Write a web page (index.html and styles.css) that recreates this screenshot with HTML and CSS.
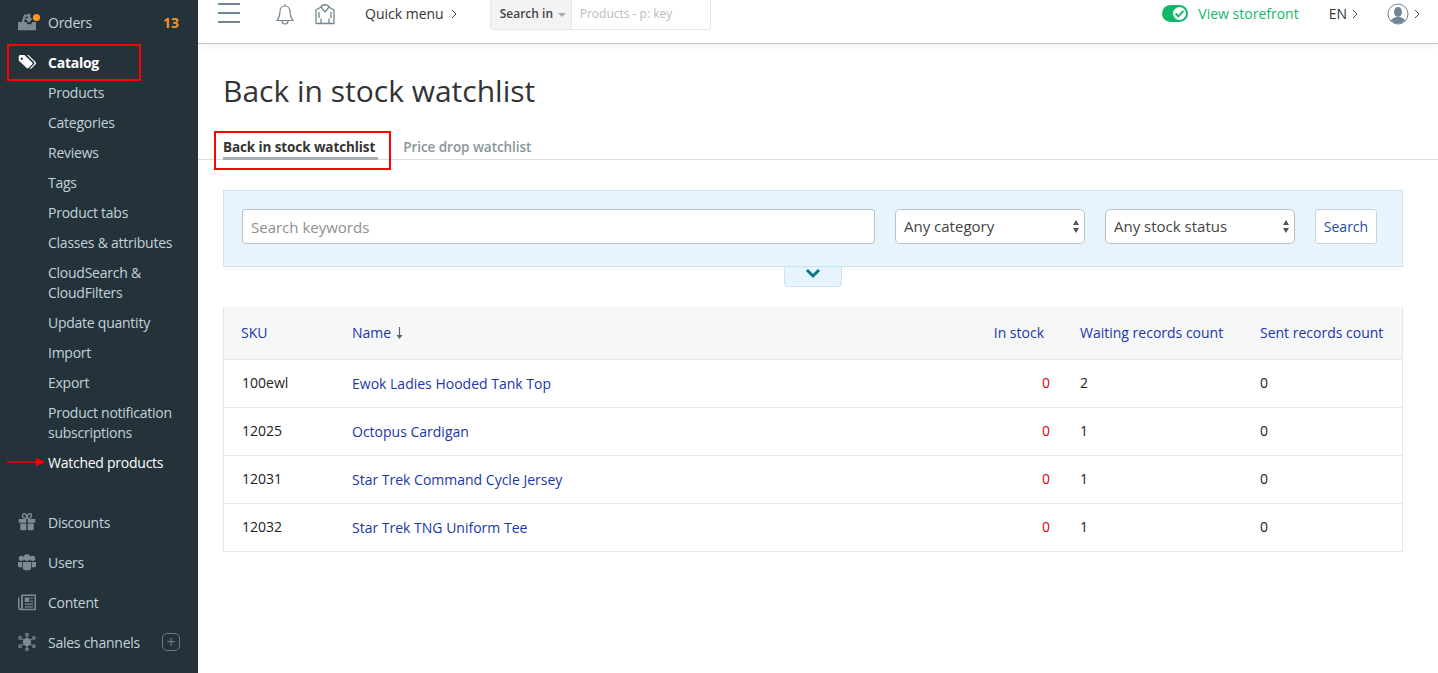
FILE: index.html
```html
<!DOCTYPE html>
<html>
    <head>
        <meta charset="utf-8" />
        <title>Back in stock watchlist</title>
        <link rel="stylesheet" href="styles.css">
    </head>
    <body>
        <div class="page">
            <div class="sidebar">
                <a class="nav-item">
                    <svg class="nav-icon" viewBox="0 0 24 24"><path d="M0 23V12h5L8 2h5v3h-3L8 12h3l1.500 3h5L19 12h5v11z"/><path d="M13 1h3.500v6H20l-5.500 6L9 7h4z"/></svg>
                    <span class="orders-dot"></span>
                    <span>Orders</span>
                    <span class="count">13</span>
                </a>
                <a class="nav-item current">
                    <svg class="nav-icon" viewBox="0 0 24 24"><path d="M1 4.500A2 2 0 0 1 3 2.500h5.500L19 12.500a1.800 1.800 0 0 1 0 2.500l-5 5a1.800 1.800 0 0 1-2.500 0L1 10zM5 6a1.600 1.600 0 1 0 0 3.200A1.600 1.600 0 0 0 5 6z"/><path d="M12 2.500h2L23.500 12a2 2 0 0 1 0 3l-6 6h-2l6-6.500a1.500 1.500 0 0 0 0-2.200z"/></svg>
                    <span>Catalog</span>
                </a>
                <div class="subnav">
                    <a>Products</a>
                    <a>Categories</a>
                    <a>Reviews</a>
                    <a>Tags</a>
                    <a>Product tabs</a>
                    <a>Classes &amp; attributes</a>
                    <a>CloudSearch &amp; CloudFilters</a>
                    <a>Update quantity</a>
                    <a>Import</a>
                    <a>Export</a>
                    <a>Product notification subscriptions</a>
                    <a class="active">Watched products</a>
                </div>
                <a class="nav-item">
                    <svg class="nav-icon" viewBox="0 0 24 24"><path d="M1 8h10v5H1zM13 8h10v5H13zM3 14h8v9H5a2 2 0 0 1-2-2zM13 14h8v7a2 2 0 0 1-2 2h-6z"/><path d="M12 7C9 7 6 6.500 6 4S8 0 10 1.500 12 7 12 7zm0 0c3 0 6-.5 6-3S16 0 14 1.500 12 7 12 7z" fill="none" stroke="#7d8b93" stroke-width="2"/></svg>
                    <span>Discounts</span>
                </a>
                <a class="nav-item">
                    <svg class="nav-icon" viewBox="0 0 24 24"><circle cx="4.500" cy="7" r="3.500"/><circle cx="19.500" cy="7" r="3.500"/><circle cx="12" cy="6" r="4.500"/><path d="M0 12h5.500v7H2a2 2 0 0 1-2-2zM18.500 12H24v5a2 2 0 0 1-2 2h-3.500zM6.500 12h11v8a3 3 0 0 1-3 3h-5a3 3 0 0 1-3-3z"/></svg>
                    <span>Users</span>
                </a>
                <a class="nav-item">
                    <svg class="nav-icon" viewBox="0 0 24 24"><path d="M5 2h19v21H3a3 3 0 0 1-3-3V6h2v14a1 1 0 0 0 2 0V3zM6.500 4v17H22V4z" fill-rule="evenodd"/><path d="M9 6h6v6H9zM16.500 6H20v1.800h-3.500zM16.500 10H20v1.800h-3.500zM9 14h11v1.800H9zM9 17.500h11v1.800H9z"/></svg>
                    <span>Content</span>
                </a>
                <a class="nav-item">
                    <svg class="nav-icon" viewBox="0 0 24 24"><circle cx="12" cy="12" r="5.500"/><g fill="none" stroke="#7d8b93" stroke-width="1.500"><path d="M12 7V4M12 17v3M8 9.500 5 7.500M16 9.500l3-2M8 14.500l-3 2M16 14.500l3 2"/><circle cx="12" cy="2.200" r="1.700"/><circle cx="12" cy="21.800" r="1.700"/><circle cx="2.800" cy="6.500" r="1.700"/><circle cx="21.200" cy="6.500" r="1.700"/><circle cx="2.800" cy="17.500" r="1.700"/><circle cx="21.200" cy="17.500" r="1.700"/></g></svg>
                    <span>Sales channels</span>
                    <span class="plus">+</span>
                </a>
                <div class="mark-box"></div>
                <svg class="mark-arrow" viewBox="0 0 38 8"><path d="M0 3.300h30V4.700H0z"/><path d="M29 0l9 4-9 4z"/></svg>
            </div>

            <div class="main">
                <div class="topbar">
                    <div class="burger"><i></i><i></i><i></i></div>
                    <svg class="top-icon bell" viewBox="0 0 20 22"><path d="M10 1v2M10 3C6.500 3 5 6 5 9c0 4-1 6-3 8.500h16C16 15 15 13 15 9c0-3-1.500-6-5-6zM7 18c0 2 1.500 3 3 3s3-1 3-3" fill="none" stroke="#75868f" stroke-width="1.200"/></svg>
                    <svg class="top-icon shop" viewBox="0 0 20 22"><path d="M1 20.500V7l5-3c1-3 7-3 8 0l5 3v13.500h-5v-5M1 20.500h5v-5M6 4l4 5 4-5M6 20.500h8M4 9v6M16 9v6" fill="none" stroke="#75868f" stroke-width="1.300"/></svg>
                    <span class="quick">Quick menu</span>
                    <svg class="chev" viewBox="0 0 6 10"><path d="M1 1l4 4-4 4" fill="none" stroke="#444" stroke-width="1"/></svg>
                    <div class="top-search">
                        <span class="search-in">Search in <b class="caret"></b></span>
                        <span class="search-hint">Products - p: key</span>
                    </div>
                    <div class="top-right">
                        <span class="switch"><span class="knob"><svg viewBox="0 0 10 10"><path d="M2 5l2.200 2.200L8 3" fill="none" stroke="#13b76a" stroke-width="1.500"/></svg></span></span>
                        <span class="storefront">View storefront</span>
                        <span class="lang">EN</span>
                        <svg class="chev" viewBox="0 0 6 10"><path d="M1 1l4 4-4 4" fill="none" stroke="#444" stroke-width="1"/></svg>
                        <svg class="avatar" viewBox="0 0 22 22"><defs><clipPath id="round"><circle cx="11" cy="11" r="9.500"/></clipPath></defs><g clip-path="url(#round)" fill="#718692"><ellipse cx="11" cy="9" rx="4" ry="5"/><path d="M3 21c0-5 4-6 6-7h4c2 1 6 2 6 7z"/></g><circle cx="11" cy="11" r="10" fill="none" stroke="#718692" stroke-width="1"/></svg>
                        <svg class="chev" viewBox="0 0 6 10"><path d="M1 1l4 4-4 4" fill="none" stroke="#444" stroke-width="1"/></svg>
                    </div>
                </div>

                <div class="content">
                    <h1>Back in stock watchlist</h1>
                    <div class="tabs">
                        <a class="tab active">Back in stock watchlist</a>
                        <a class="tab">Price drop watchlist</a>
                        <div class="mark-tab"></div>
                    </div>

                    <div class="filters">
                        <input class="keywords" type="text" placeholder="Search keywords" />
                        <div class="select">Any category<span class="arrows"></span></div>
                        <div class="select">Any stock status<span class="arrows"></span></div>
                        <button class="search-btn">Search</button>
                        <div class="more">
                            <svg viewBox="0 0 16 11"><path d="M2 2l6 6 6-6" fill="none" stroke="#03788c" stroke-width="3"/></svg>
                        </div>
                    </div>

                    <table class="list">
                        <thead>
                            <tr>
                                <th class="col-sku"><a>SKU</a></th>
                                <th><a>Name</a><svg class="sort" viewBox="0 0 7 12"><path d="M3.500 0v10" stroke="#5b666c" stroke-width="1.200" fill="none"/><path d="M0.500 8h6L3.500 12z" fill="#5b666c"/></svg></th>
                                <th class="col-stock"><a>In stock</a></th>
                                <th class="col-wait"><a>Waiting records count</a></th>
                                <th class="col-sent"><a>Sent records count</a></th>
                            </tr>
                        </thead>
                        <tbody>
                            <tr>
                                <td>100ewl</td>
                                <td class="name"><a>Ewok Ladies Hooded Tank Top</a></td>
                                <td class="stock">0</td>
                                <td>2</td>
                                <td>0</td>
                            </tr>
                            <tr>
                                <td>12025</td>
                                <td class="name"><a>Octopus Cardigan</a></td>
                                <td class="stock">0</td>
                                <td>1</td>
                                <td>0</td>
                            </tr>
                            <tr>
                                <td>12031</td>
                                <td class="name"><a>Star Trek Command Cycle Jersey</a></td>
                                <td class="stock">0</td>
                                <td>1</td>
                                <td>0</td>
                            </tr>
                            <tr>
                                <td>12032</td>
                                <td class="name"><a>Star Trek TNG Uniform Tee</a></td>
                                <td class="stock">0</td>
                                <td>1</td>
                                <td>0</td>
                            </tr>
                        </tbody>
                    </table>
                </div>
            </div>
        </div>
    </body>
</html>
```

FILE: styles.css
```css
html {
    margin: 0px;
    padding: 0px;
}
body {
    font-family: 'Open Sans', 'Liberation Sans', sans-serif;
    font-size: 14px;
    margin: 0px;
    padding: 0px;
    color: #333;
    background-color: #fff;
    overflow: hidden;
}
.page {
    display: flex;
    height: 673px;
}

/* sidebar */
.sidebar {
    position: relative;
    width: 198px;
    flex: none;
    box-sizing: border-box;
    padding-top: 2px;
    background-color: #24323a;
    color: #c3d2da;
    letter-spacing: -0.25px;
}
.nav-item {
    position: relative;
    display: flex;
    align-items: center;
    height: 40px;
    padding-left: 18px;
}
.nav-item.current {
    color: #fff;
    font-weight: 700;
}
.nav-icon {
    width: 18px;
    height: 18px;
    margin-right: 12px;
    fill: #7d8b93;
}
.current .nav-icon {
    fill: #fff;
}
.orders-dot {
    position: absolute;
    left: 33px;
    top: 12px;
    width: 7px;
    height: 7px;
    border-radius: 50%;
    background-color: #ff9a1f;
}
.count {
    margin-left: auto;
    margin-right: 19px;
    color: #f7931e;
    font-weight: 700;
    letter-spacing: 0px;
}
.plus {
    display: flex;
    align-items: center;
    justify-content: center;
    box-sizing: border-box;
    width: 18px;
    height: 18px;
    margin-left: auto;
    margin-right: 18px;
    border: 1px solid #6c7a82;
    border-radius: 5px;
    color: #6c7a82;
    font-size: 16px;
    line-height: 1;
}
.subnav {
    display: flex;
    flex-direction: column;
    gap: 10px;
    padding-left: 48px;
    padding-right: 20px;
    margin-top: 1px;
    margin-bottom: 29px;
    line-height: 20px;
}
.subnav a.active {
    color: #fff;
}
.mark-box {
    position: absolute;
    left: 7px;
    top: 44px;
    width: 134px;
    height: 37px;
    box-sizing: border-box;
    border: 2px solid #f00;
}
.mark-arrow {
    position: absolute;
    left: 7px;
    top: 458px;
    width: 38px;
    height: 8px;
    fill: #f00;
}

/* top bar */
.main {
    flex: 1;
    min-width: 0;
}
.topbar {
    display: flex;
    align-items: center;
    height: 44px;
    box-sizing: border-box;
    padding-bottom: 16px;
    padding-left: 20px;
    border-bottom: 1px solid #c6c6c6;
    box-shadow: 0 1px 8px rgba(0, 0, 0, 0.08);
}
.burger {
    display: flex;
    flex-direction: column;
    gap: 7px;
    width: 22px;
    margin-right: 35px;
    margin-top: -2px;
}
.burger i {
    display: block;
    height: 2px;
    background-color: #6f8791;
}
.top-icon {
    width: 20px;
    height: 22px;
}
.shop {
    margin-left: 20px;
    margin-right: 30px;
}
.quick {
    margin-right: 7px;
}
.chev {
    width: 6px;
    height: 10px;
}
.top-search {
    display: flex;
    height: 29px;
    margin-left: 33px;
    font-size: 12px;
    align-self: flex-start;
    border: 1px solid #e6e6e6;
    border-top: 0;
    border-radius: 0 0 3px 3px;
    line-height: 28px;
}
.search-in {
    width: 81px;
    box-sizing: border-box;
    padding-left: 9px;
    background-color: #f3f3f3;
    border-right: 1px solid #e6e6e6;
    font-weight: 600;
    color: #444;
}
.caret {
    display: inline-block;
    margin-left: 2px;
    vertical-align: middle;
    border-left: 4px solid transparent;
    border-right: 4px solid transparent;
    border-top: 4px solid #aaa;
}
.search-hint {
    width: 138px;
    box-sizing: border-box;
    padding-left: 8px;
    color: #bbb;
}
.top-right {
    display: flex;
    align-items: center;
    margin-left: auto;
    padding-right: 18px;
}
.switch {
    display: flex;
    align-items: center;
    justify-content: flex-end;
    width: 26px;
    height: 17px;
    box-sizing: border-box;
    padding-right: 2px;
    margin-right: 10px;
    border-radius: 9px;
    background-color: #13b76a;
}
.knob {
    width: 13px;
    height: 13px;
    border-radius: 50%;
    background-color: #fff;
}
.knob svg {
    display: block;
    width: 13px;
    height: 13px;
}
.storefront {
    color: #13b76a;
    margin-right: 30px;
}
.lang {
    margin-right: 5px;
}
.avatar {
    width: 22px;
    height: 22px;
    margin-left: 29px;
    margin-right: 5px;
}

/* content */
.content {
    padding: 0px 35px 0px 25px;
}
h1 {
    margin: 0px;
    padding-top: 25px;
    font-size: 30px;
    font-weight: 400;
    line-height: 44px;
    color: #333;
}
.tabs {
    position: relative;
    display: flex;
    gap: 25px;
    height: 46px;
    margin-left: -25px;
    margin-right: -35px;
    margin-top: 1px;
    padding-left: 25px;
    box-sizing: border-box;
    border-bottom: 1px solid #ddd;
    font-size: 13.5px;
}
.tab {
    padding-top: 23px;
    height: 22px;
    line-height: 20px;
    color: #8a959b;
    font-weight: 600;
    letter-spacing: -0.05px;
}
.tab.active {
    color: #333;
    font-weight: 700;
    height: 20px;
    border-bottom: 3px solid #a6aeb3;
    padding-right: 3px;
    letter-spacing: -0.1px;
}
.mark-tab {
    position: absolute;
    left: 16px;
    top: 17px;
    width: 177px;
    height: 39px;
    box-sizing: border-box;
    border: 2px solid #f00;
}

/* filters */
.filters {
    position: relative;
    display: flex;
    gap: 20px;
    height: 77px;
    margin-top: 30px;
    box-sizing: border-box;
    padding: 18px 25px 0px 18px;
    background-color: #e6f5fd;
    border: 1px solid #cfe2ec;
}
.keywords {
    flex: 1;
    min-width: 0;
    height: 35px;
    box-sizing: border-box;
    padding: 0px 8px;
    font-family: inherit;
    font-size: 15px;
    border: 1px solid #b8c2c8;
    border-radius: 3px;
    background-color: #fff;
}
.keywords::placeholder {
    color: #8f8f8f;
    opacity: 1;
}
.select {
    position: relative;
    width: 190px;
    height: 35px;
    box-sizing: border-box;
    padding-left: 8px;
    font-size: 15px;
    line-height: 33px;
    color: #444;
    border: 1px solid #b8c2c8;
    border-radius: 5px;
    background-color: #fff;
}
.arrows::before,
.arrows::after {
    content: '';
    position: absolute;
    right: 5px;
    border-left: 3px solid transparent;
    border-right: 3px solid transparent;
}
.arrows::before {
    top: 10px;
    border-bottom: 5px solid #555;
}
.arrows::after {
    top: 18px;
    border-top: 5px solid #555;
}
.search-btn {
    width: 62px;
    height: 35px;
    padding: 0px;
    font-family: inherit;
    font-size: 14px;
    color: #1c4fa0;
    background-color: #fff;
    border: 1px solid #c9d3d9;
    border-radius: 3px;
}
.more {
    position: absolute;
    left: 560px;
    top: 76px;
    width: 58px;
    height: 20px;
    box-sizing: border-box;
    background-color: #e6f5fd;
    border: 1px solid #cfe2ec;
    border-top: 0;
    border-radius: 0 0 4px 4px;
    text-align: center;
}
.more svg {
    display: block;
    width: 16px;
    height: 11px;
    margin: 1px auto 0px;
}

/* table */
.list {
    width: 100%;
    margin-top: 40px;
    border-collapse: collapse;
    table-layout: fixed;
    border: 1px solid #e6e6e6;
    border-top: 0;
}
.list th {
    height: 50px;
    padding: 0px 18px 2px;
    background-color: #f7f7f7;
    font-weight: 400;
    text-align: left;
    border-bottom: 1px solid #e6e6e6;
}
.list td {
    height: 45px;
    padding: 0px 18px 2px;
    color: #222;
    border-bottom: 1px solid #e6e6e6;
}
.list td.name {
    padding-bottom: 0px;
}
.list a {
    color: #1a36ad;
}
.sort {
    width: 7px;
    height: 12px;
    margin-left: 5px;
    vertical-align: -1px;
}
.col-sku {
    width: 74px;
}
.col-sku a {
    margin-left: -1px;
}
.col-stock {
    width: 72px;
    text-align: right !important;
}
.col-wait {
    width: 144px;
}
.col-sent {
    width: 124px;
}
.list td.stock {
    color: #e00000;
    text-align: right;
    padding-right: 12px;
}
```
